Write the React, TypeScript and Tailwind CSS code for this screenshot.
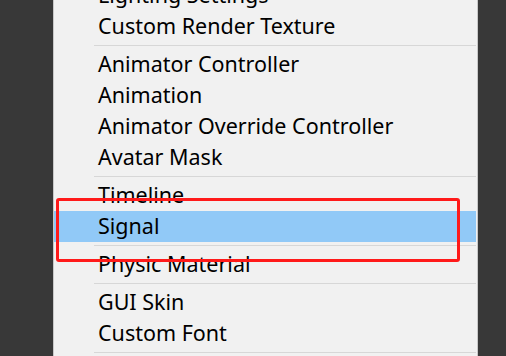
const groups: string[][] = [
  ['Lighting Settings', 'Custom Render Texture'],
  ['Animator Controller', 'Animation', 'Animator Override Controller', 'Avatar Mask'],
  ['Timeline', 'Signal'],
  ['Physic Material'],
  ['GUI Skin', 'Custom Font'],
];

function Item({ label }: { label: string }) {
  const active = label === 'Signal';
  return (
    <div className={`h-[31px] flex items-center pl-[44px] pb-[2px] ${active ? 'bg-[#91c9f7]' : ''}`}>
      <span className="leading-none">{label}</span>
    </div>
  );
}

function Separator() {
  return (
    <div className="h-[7px] pt-[3px] pl-[40px]">
      <div className="h-px bg-[#d7d7d7]" />
    </div>
  );
}

export default function App() {
  return (
    <div className="h-[356px] w-[506px] overflow-hidden bg-[#383838] flex">
      <div className="ml-[53px] w-[425px] h-full bg-[#f1f1f1] border-l border-r border-[#c8c8c8] relative">
        <div
          className="mt-[-20px] pr-[1px] text-[21.5px] text-black"
          style={{ fontFamily: '"Noto Sans", sans-serif' }}
        >
          {groups.map((g, i) => (
            <div key={i}>
              {i > 0 && <Separator />}
              {g.map((label) => (
                <Item key={label} label={label} />
              ))}
            </div>
          ))}
          <Separator />
        </div>
        <div className="absolute left-[2px] top-[198px] w-[404px] h-[64px] border-[3px] border-[#ff1a1a] rounded-[3px]" />
      </div>
    </div>
  );
}
